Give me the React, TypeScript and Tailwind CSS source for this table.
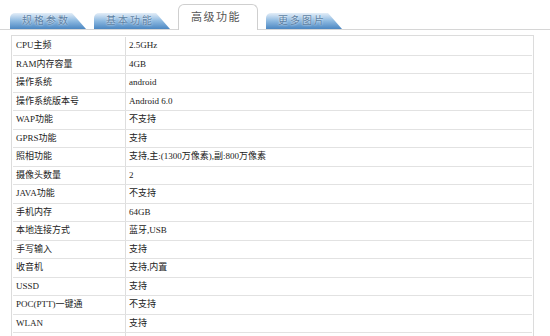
const rows: [string, string][] = [
  ["CPU主频", "2.5GHz"],
  ["RAM内存容量", "4GB"],
  ["操作系统", "android"],
  ["操作系统版本号", "Android 6.0"],
  ["WAP功能", "不支持"],
  ["GPRS功能", "支持"],
  ["照相功能", "支持,主:(1300万像素),副:800万像素"],
  ["摄像头数量", "2"],
  ["JAVA功能", "不支持"],
  ["手机内存", "64GB"],
  ["本地连接方式", "蓝牙,USB"],
  ["手写输入", "支持"],
  ["收音机", "支持,内置"],
  ["USSD", "支持"],
  ["POC(PTT)一键通", "不支持"],
  ["WLAN", "支持"],
  ["", ""],
]

function BlueTab({ label }: { label: string }) {
  return (
    <div className="mt-[13px] h-[16px] w-[76px] rounded-tl-[5px] bg-gradient-to-b from-[#e4eef8] via-[#8db9e0] to-[#4b87c2] [clip-path:polygon(0_0,62px_0,76px_16px,0_16px)] flex items-center pl-[12px] text-[10px] leading-none tracking-[2px] text-[#5c7fa3] [text-shadow:0_0_2px_#fff]">
      {label}
    </div>
  )
}

export default function App() {
  return (
    <div
      className="w-[550px] h-[336px] overflow-hidden bg-white"
      style={{ fontFamily: '"Liberation Serif", "Noto Sans CJK SC", serif' }}
    >
      <div className="flex items-end gap-[8px] pl-[10px] h-[30px] border-b border-[#d6d6d6]">
        <BlueTab label="规格参数" />
        <BlueTab label="基本功能" />
        <div className="h-[26px] w-[80px] -mb-px bg-white border border-b-0 border-[#cfcfcf] rounded-t-[6px] flex items-center justify-center pr-[4px] text-[11px] tracking-[1.5px] text-[#555]">
          高级功能
        </div>
        <BlueTab label="更多图片" />
      </div>

      <div className="ml-[11px] mt-[5px] w-[523px] border border-[#dcdcdc] p-px">
        {rows.map(([k, v], i) => (
          <div key={i} className="flex h-[18.5px] border-b border-[#e2e2e2] text-[9px] text-[#222]">
            <div className="w-[113px] shrink-0 border-r border-[#dedede] pl-[3px] flex items-center">{k}</div>
            <div className="flex-1 pl-[3px] flex items-center">{v}</div>
          </div>
        ))}
      </div>
    </div>
  )
}
